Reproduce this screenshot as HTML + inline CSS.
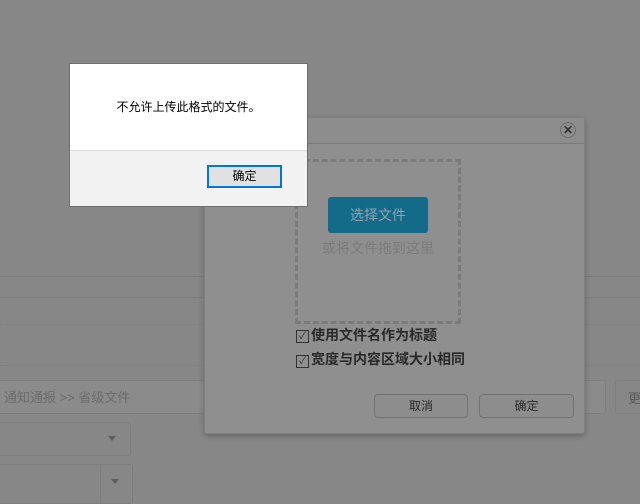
<!DOCTYPE html>
<html><head><meta charset="utf-8"><style>
*{margin:0;padding:0;box-sizing:border-box}
body{width:640px;height:496px;background:#878787;position:relative;overflow:hidden;font-family:"Liberation Sans","Noto Sans CJK SC",sans-serif;font-size:12px}
.a{position:absolute}
</style></head><body>
<div class="a" style="left:0;top:276px;width:640px;border-top:1px solid #7d7d7d"></div>
<div class="a" style="left:0;top:297px;width:640px;border-top:1px solid #7d7d7d"></div>
<div class="a" style="left:0;top:324px;width:640px;border-top:1px dotted #7d7d7d"></div>
<div class="a" style="left:0;top:365px;width:640px;border-top:1px dotted #7d7d7d"></div>
<div class="a" style="left:-4px;top:380px;width:499px;height:34px;background:#8b8b8b;border:1px solid #7e7e7e"></div>
<div class="a" style="left:4px;top:387px;color:#6c6c6c;font-size:13px">通知通报 &gt;&gt; 省级文件</div>
<div class="a" style="left:560px;top:380px;width:46px;height:34px;background:#8b8b8b;border:1px solid #7e7e7e;border-radius:3px"></div>
<div class="a" style="left:615px;top:380px;width:40px;height:34px;border:1px solid #7e7e7e;border-radius:3px;color:#5a5a5a;padding:7px 0 0 12px;font-size:13px">更</div>
<div class="a" style="left:-4px;top:422px;width:135px;height:34px;border:1px solid #7e7e7e;border-radius:3px"></div>
<div class="a" style="left:108px;top:436px;border:4px solid transparent;border-top:5px solid #5e5e5e"></div>
<div class="a" style="left:-4px;top:464px;width:137px;height:40px;border:1px solid #7e7e7e;border-radius:3px"></div>
<div class="a" style="left:100px;top:464px;height:40px;border-left:1px solid #7e7e7e"></div>
<div class="a" style="left:111px;top:479px;border:4px solid transparent;border-top:5px solid #5e5e5e"></div>

<div class="a" style="left:204px;top:117px;width:381px;height:317px;background:#8f8f8f;border:1px solid #7f7f7f;border-radius:3px;box-shadow:0 2px 6px rgba(0,0,0,.25)">
<div style="height:26px;background:#8d8d8d;border-bottom:1px solid #787878"></div>
</div>
<div class="a" style="left:560px;top:122px;width:16px;height:16px;border-radius:50%;border:1px solid #6f6f6f;color:#333;font-size:12px;font-weight:bold;text-align:center;line-height:14px">✕</div>
<div class="a" style="left:295px;top:159px;width:166px;height:165px;border:3px dashed #7b7b7b"></div>
<div class="a" style="left:328px;top:197px;width:100px;height:36px;background:#136b89;border-radius:3px;color:#8fa4ae;font-size:14px;text-align:center;line-height:36px">选择文件</div>
<div class="a" style="left:320px;top:238px;width:116px;text-align:center;color:#7b7b7b;font-size:14px">或将文件拖到这里</div>
<div class="a" style="left:296px;top:330px;width:13px;height:13px;border:1px solid #333;font-size:10px;line-height:11px;color:#333;text-align:center">✓</div>
<div class="a" style="left:311px;top:325px;color:#2a2a2a;font-size:14px;font-weight:bold">使用文件名作为标题</div>
<div class="a" style="left:296px;top:355px;width:13px;height:13px;border:1px solid #333;font-size:10px;line-height:11px;color:#333;text-align:center">✓</div>
<div class="a" style="left:311px;top:349px;color:#2a2a2a;font-size:14px;font-weight:bold">宽度与内容区域大小相同</div>
<div class="a" style="left:374px;top:394px;width:94px;height:24px;border:1px solid #727272;border-radius:4px;background:#8d8d8d;text-align:center;line-height:22px;color:#2a2a2a">取消</div>
<div class="a" style="left:479px;top:394px;width:95px;height:24px;border:1px solid #727272;border-radius:4px;background:#8d8d8d;text-align:center;line-height:22px;color:#2a2a2a">确定</div>

<div class="a" style="left:69px;top:63px;width:239px;height:144px;background:#f2f2f2;border:1px solid #6e6e6e">
<div style="height:87px;background:#fff;border-bottom:1px solid #dfdfdf;text-align:center;padding-top:34px;color:#000;font-size:12px">不允许上传此格式的文件。</div>
<div class="a" style="left:137px;top:101px;width:75px;height:23px;border:2px solid #0078d7;background:#e1e1e1;text-align:center;line-height:19px;color:#000">确定</div>
</div>
</body></html>
